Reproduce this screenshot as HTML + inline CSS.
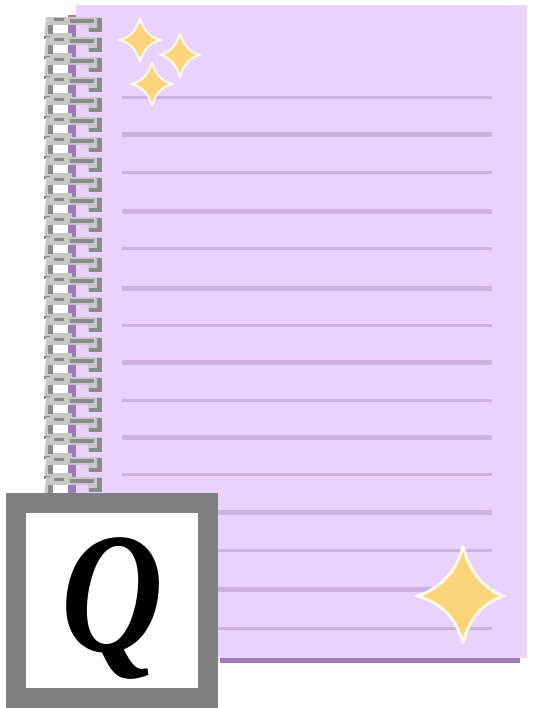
<!DOCTYPE html>
<html><head><style>
body{margin:0;width:538px;height:708px;background:#fff;position:relative;overflow:hidden;font-family:"Liberation Serif",serif}
.abs{position:absolute}
</style></head><body>
<div class="abs" style="left:220px;top:656px;width:300px;height:7px;background:#a07ab8"></div>
<div class="abs" style="left:76px;top:5px;width:451px;height:653px;background:#e9d3fd"></div>
<div class="abs" style="left:68px;top:15px;width:8px;height:480px;background:#a07ab8"></div>
<svg class="abs" style="left:0;top:0" width="538" height="708">
<g fill="#cdb0e0">
<rect x="122" y="96" width="370" height="3"/><rect x="122" y="132" width="370" height="5"/>
<rect x="122" y="171" width="370" height="3"/><rect x="122" y="209" width="370" height="5"/>
<rect x="122" y="247" width="370" height="3"/><rect x="122" y="286" width="370" height="5"/>
<rect x="122" y="324" width="370" height="3"/><rect x="122" y="360" width="370" height="5"/>
<rect x="122" y="399" width="370" height="3"/><rect x="122" y="435" width="370" height="5"/>
<rect x="122" y="473" width="370" height="3"/><rect x="122" y="510" width="370" height="5"/>
<rect x="122" y="549" width="370" height="3"/><rect x="122" y="587" width="370" height="5"/>
<rect x="122" y="627" width="370" height="3"/>
</g>
<defs>
<g id="r">
<path d="M46 0H101V14H88V8H52V16H72V22H44Z" fill="#c8c8c8"/>
<path d="M54 1H64V4H54Z M70 2H94V6H70Z M97 1H102V15H89V11H97Z M48 8H53V17H48Z M44 19H50V22H44Z" fill="#8a8a8a"/>
</g>
</defs>
<g>
<use href="#r" y="17"/><use href="#r" y="37"/><use href="#r" y="57"/><use href="#r" y="77"/>
<use href="#r" y="97"/><use href="#r" y="117"/><use href="#r" y="137"/><use href="#r" y="157"/>
<use href="#r" y="177"/><use href="#r" y="197"/><use href="#r" y="217"/><use href="#r" y="237"/>
<use href="#r" y="257"/><use href="#r" y="277"/><use href="#r" y="297"/><use href="#r" y="317"/>
<use href="#r" y="337"/><use href="#r" y="357"/><use href="#r" y="377"/><use href="#r" y="397"/>
<use href="#r" y="417"/><use href="#r" y="437"/><use href="#r" y="457"/><use href="#r" y="477"/>
</g>
<g fill="#fcd47c" stroke="#fffbe8" stroke-width="2">
<path d="M140 18 Q144 35 160 40 Q144 45 140 62 Q136 45 120 40 Q136 35 140 18Z"/>
<path d="M180 33 Q184 50 199 55 Q184 60 180 78 Q176 60 161 55 Q176 50 180 33Z"/>
<path d="M152 62 Q156 79 172 84 Q156 89 152 106 Q148 89 132 84 Q148 79 152 62Z"/>
<path d="M463 546 Q472 583 503 596 Q472 607 463 643 Q454 607 418 596 Q454 583 463 546Z" stroke-width="3"/>
</g>
</svg>
<div class="abs" style="left:6px;top:493px;width:172px;height:175px;border:20px solid #808080;background:#fff;overflow:hidden">
<div style="position:absolute;left:0;width:172px;top:-14px;text-align:center;font-style:italic;font-weight:bold;font-size:172px;line-height:190px;color:#000;transform:scaleX(0.82)">Q</div>
</div>
</body></html>
